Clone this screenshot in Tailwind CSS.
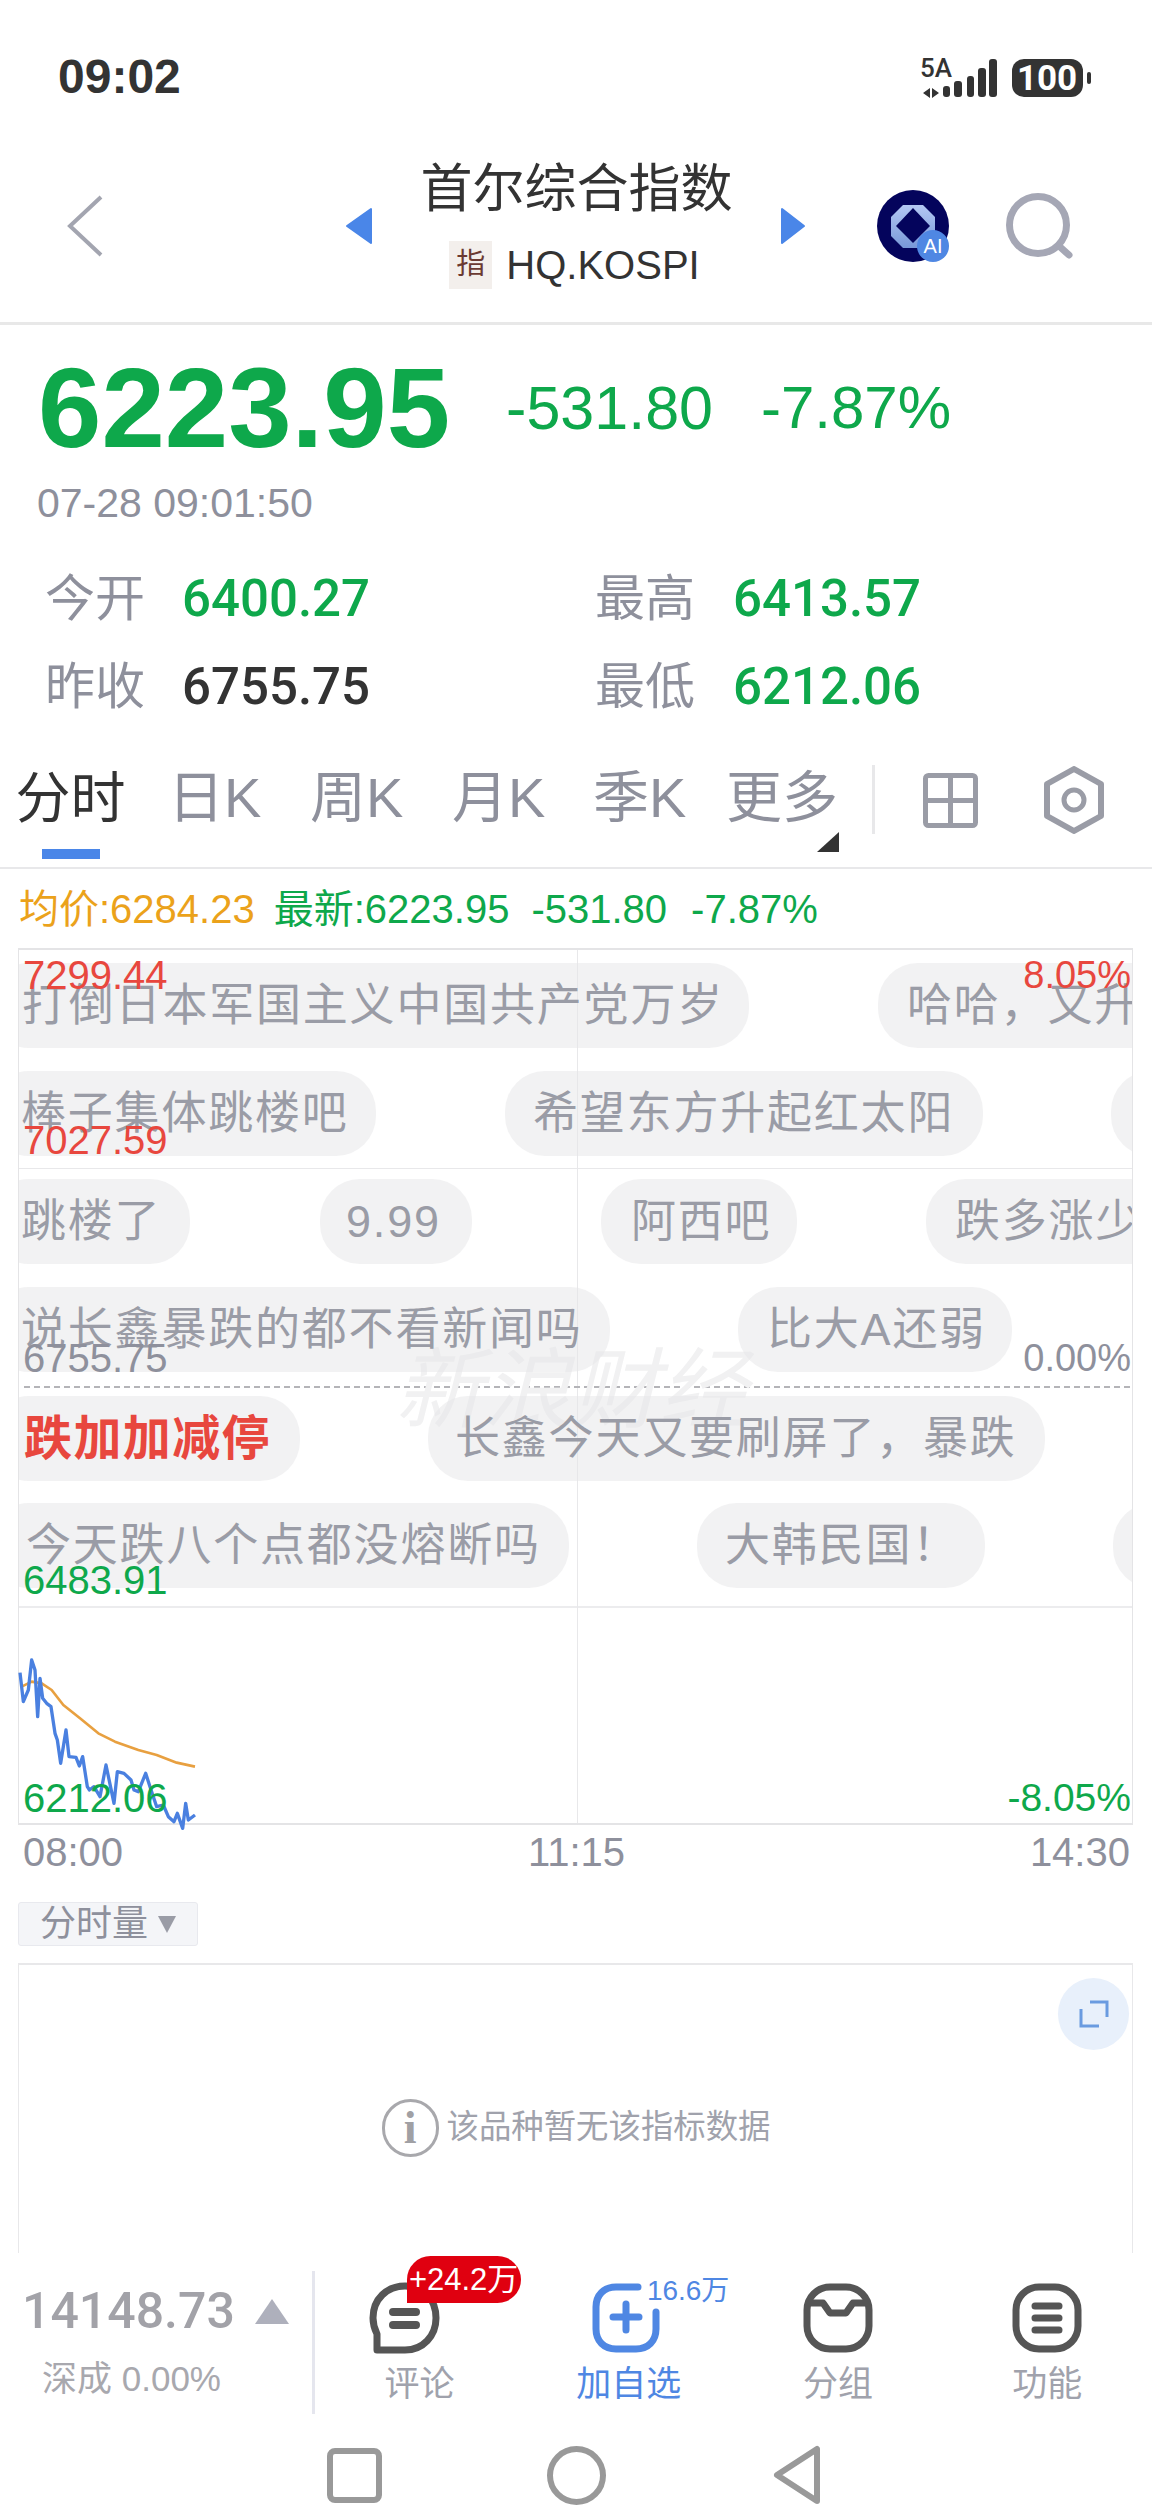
<!DOCTYPE html>
<html lang="zh">
  <head>
    <meta charset="UTF-8" />
    <meta name="viewport" content="width=device-width, initial-scale=1.0" />
    <title>首尔综合指数</title>
    <script src="https://cdn.jsdelivr.net/npm/@tailwindcss/browser@4"></script>
  </head>

  <body>
    <div class="w-[1152px] h-[2520px] overflow-hidden bg-white flex flex-col font-['Liberation_Sans','Noto_Sans_CJK_SC',sans-serif]">

      <!-- Status bar -->
      <div class="h-[154px] shrink-0 flex items-center justify-between pl-[58px] pr-[58px]">
        <span class="text-[48px] leading-none font-bold text-[#333]">09:02</span>
        <svg width="174" height="40" viewBox="0 0 174 40" class="mt-[2px]">
          <text x="0" y="19" font-size="26" font-weight="500" fill="#333" font-family="Roboto">5A</text>
          <path d="M10 30 L3 35 L10 40 Z M12 30 L19 35 L12 40 Z" fill="#333" />
          <rect x="23" y="28" width="7" height="11" rx="3" fill="#333" />
          <rect x="34" y="23" width="8" height="16" rx="3" fill="#333" />
          <rect x="47" y="18" width="7" height="21" rx="3" fill="#333" />
          <rect x="58" y="10" width="8" height="29" rx="3" fill="#333" />
          <rect x="69" y="1" width="8" height="38" rx="3" fill="#333" />
          <rect x="92" y="1" width="71" height="38" rx="12" fill="#333" />
          <text x="127" y="32" font-size="35" font-weight="700" fill="#fff" text-anchor="middle" font-family="Roboto">100</text>
          <rect x="167" y="14" width="4" height="12" rx="2" fill="#333" />
        </svg>
      </div>

      <!-- Header -->
      <header class="h-[171px] shrink-0 border-b-[3px] border-[#e8e8e8] flex items-start pt-[8px]">
        <div class="w-[345px] shrink-0 h-[127px] flex items-center pl-[67px]">
          <svg width="36" height="64" viewBox="0 0 36 64"><path d="M34 3 L3 32 L34 61" fill="none" stroke="#a3a5b0" stroke-width="4" /></svg>
        </div>
        <div class="w-[461px] shrink-0 h-[127px] flex items-center justify-between">
          <svg width="28" height="38" viewBox="0 0 28 38"><path d="M26 2 V36 L2 19 Z" fill="#4a86e8" stroke="#4a86e8" stroke-width="2" stroke-linejoin="round" /></svg>
          <div class="flex flex-col items-center">
            <h1 class="text-[52px] leading-[52px] text-[#333]">首尔综合指数</h1>
            <div class="flex items-center gap-[14px] mt-[26px] -ml-[4px]">
              <span class="w-[43px] h-[48px] bg-[#f3efec] text-[#6b3a32] text-[29px] flex items-center justify-center">指</span>
              <span class="text-[40px] leading-[48px] text-[#333]">HQ.KOSPI</span>
            </div>
          </div>
          <svg width="26" height="38" viewBox="0 0 26 38"><path d="M2 2 V36 L24 19 Z" fill="#4a86e8" stroke="#4a86e8" stroke-width="2" stroke-linejoin="round" /></svg>
        </div>
        <div class="h-[127px] flex items-center ml-[71px]">
          <svg width="72" height="72" viewBox="0 0 72 72">
            <defs><linearGradient id="ringFill" x1="0" y1="0" x2="0" y2="1"><stop offset="0" stop-color="#b4c8f4" /><stop offset="1" stop-color="#7898d8" /></linearGradient></defs>
            <circle cx="36" cy="36" r="36" fill="#04045c" />
            <path d="M26 15 H46 L58 27 V46 L46 58 H26 L14 46 V27 Z" fill="url(#ringFill)" />
            <path d="M36 18 L53 36 L36 53 L19 36 Z" fill="#04045c" />
            <circle cx="56" cy="56" r="16" fill="#4f87e3" />
            <text x="56" y="63" font-size="20" fill="#fff" text-anchor="middle" font-family="Liberation Sans">AI</text>
          </svg>
          <svg width="68" height="66" viewBox="0 0 68 66" class="ml-[57px]">
            <circle cx="32" cy="32" r="28.5" fill="none" stroke="#a5a7b5" stroke-width="7" />
            <line x1="53" y1="53" x2="63" y2="62" stroke="#a5a7b5" stroke-width="7" stroke-linecap="round" />
          </svg>
        </div>
      </header>

      <!-- Quote -->
      <section class="shrink-0 pt-[33px]">
        <div class="flex items-center h-[100px] pl-[38px] text-[#0ea84b]">
          <span class="text-[114px] leading-[100px] font-bold">6223.95</span>
          <span class="text-[61px] leading-none ml-[56px]">-531.80</span>
          <span class="text-[60px] leading-none ml-[48px]">-7.87%</span>
        </div>
        <div class="h-[50px] mt-[20px] pl-[37px] text-[41px] leading-[50px] text-[#8e909c]">07-28 09:01:50</div>
        <div class="grid grid-cols-[595px_1fr] mt-[27px] font-['Roboto','Noto_Sans_CJK_SC',sans-serif]">
          <div class="h-[88px] flex items-center pl-[45px]"><span class="w-[137px] text-[50px] text-[#8e909c]">今开</span><span class="text-[51px] font-medium text-[#0ea84b]">6400.27</span></div>
          <div class="h-[88px] flex items-center"><span class="w-[138px] text-[50px] text-[#8e909c]">最高</span><span class="text-[51px] font-medium text-[#0ea84b]">6413.57</span></div>
          <div class="h-[88px] flex items-center pl-[45px]"><span class="w-[137px] text-[50px] text-[#8e909c]">昨收</span><span class="text-[51px] font-medium text-[#333]">6755.75</span></div>
          <div class="h-[88px] flex items-center"><span class="w-[138px] text-[50px] text-[#8e909c]">最低</span><span class="text-[51px] font-medium text-[#0ea84b]">6212.06</span></div>
        </div>
      </section>

      <!-- Period tabs -->
      <nav class="relative h-[138px] shrink-0 border-b-2 border-[#e8e8ea] flex items-start pt-[31px] pl-[16px] text-[56px] leading-[72px] text-[#8e909c] whitespace-nowrap">
        <div class="flex flex-col items-center w-[109px]">
          <span class="text-[55px] text-[#333]">分时</span>
          <span class="w-[58px] h-[10px] bg-[#4a86e8] mt-[15px]"></span>
        </div>
        <span class="ml-[43px] w-[92px]">日K</span>
        <span class="ml-[50px] w-[92px]">周K</span>
        <span class="ml-[50px] w-[92px]">月K</span>
        <span class="ml-[49px] w-[92px]">季K</span>
        <span class="ml-[41px] w-[112px]">更多</span>
        <span class="w-[3px] h-[69px] bg-[#e8e8ea] mt-[3px] ml-[34px]"></span>
        <svg width="55" height="55" viewBox="0 0 55 55" class="ml-[48px] mt-[11px]">
          <rect x="2.5" y="2.5" width="50" height="50" rx="3" fill="none" stroke="#9a9ca6" stroke-width="5" />
          <path d="M27.5 3 V52 M3 27.5 H52" stroke="#9a9ca6" stroke-width="5" />
        </svg>
        <svg width="60" height="68" viewBox="0 0 60 68" class="ml-[66px] mt-[4px]">
          <path d="M30 3 L57 18 V50 L30 65 L3 50 V18 Z" fill="none" stroke="#9a9ca6" stroke-width="6" stroke-linejoin="round" />
          <circle cx="30" cy="34" r="10" fill="none" stroke="#9a9ca6" stroke-width="5" />
        </svg>
        <svg width="22" height="20" viewBox="0 0 22 20" class="absolute left-[817px] top-[101px]"><path d="M22 0 V20 H0 Z" fill="#333" /></svg>
      </nav>

      <!-- Legend -->
      <div class="h-[79px] shrink-0 flex items-center pl-[19px] text-[40px] leading-none text-[#0ea84b] whitespace-nowrap">
        <span class="text-[#eba21b]">均价:6284.23</span>
        <span class="ml-[19px]">最新:6223.95</span>
        <span class="ml-[22px]">-531.80</span>
        <span class="ml-[24px]">-7.87%</span>
      </div>

      <!-- Chart -->
      <div class="relative shrink-0 ml-[18px] w-[1115px] h-[877px] border border-[#e4e4e6] border-t-2 border-b-2">
        <div class="absolute left-0 right-0 top-[218px] h-px bg-[#e8e8ea]"></div>
        <div class="absolute left-0 right-0 top-[656px] h-[2px] bg-[#ececee]"></div>
        <div class="absolute top-0 bottom-0 left-[558px] w-px bg-[#e8e8ea]"></div>
        <div class="absolute left-[5px] right-[2px] top-[436px] border-t-2 border-dashed border-[#b4b4b8]"></div>
        <span class="absolute left-[376px] top-[396px] text-[88px] leading-[90px] italic text-[#f1f1f2] whitespace-nowrap">新浪财经</span>

        <svg width="260" height="240" viewBox="0 0 780 720" class="absolute left-[-19px] top-[670px]">
          <polyline fill="none" stroke="#e8a040" stroke-width="8" stroke-linejoin="round" points="65,200 95,185 125,190 155,210 190,255 240,295 295,340 345,365 415,390 470,405 530,428 585,440" />
          <polyline fill="none" stroke="#4a80e0" stroke-width="10" stroke-linejoin="round" points="60,158 70,245 85,210 95,120 105,150 113,290 120,175 128,235 140,250 153,260 165,340 172,360 182,430 198,330 207,410 228,412 238,438 248,410 262,500 268,510 282,500 300,530 318,435 342,550 352,455 372,460 393,480 402,510 415,515 437,460 450,500 470,560 490,555 505,590 522,605 532,580 548,625 557,550 565,600 585,585" />
        </svg>

        <!-- Danmaku comments -->
        <div class="absolute inset-0 overflow-hidden text-[45px] tracking-[1.8px] text-[#9a9ca6]">
          <div class="absolute left-[-30px] top-[13px] w-[760px] h-[85px] rounded-[40px] bg-[#e6e6e8]/50 flex items-center pl-[33px] whitespace-nowrap">打倒日本军国主义中国共产党万岁</div>
          <div class="absolute left-[859px] top-[13px] w-[400px] h-[85px] rounded-[40px] bg-[#e6e6e8]/50 flex items-center pl-[29px] whitespace-nowrap">哈哈，又升</div>
          <div class="absolute left-[-30px] top-[121px] w-[387px] h-[85px] rounded-[40px] bg-[#e6e6e8]/50 flex items-center pl-[32px] whitespace-nowrap">棒子集体跳楼吧</div>
          <div class="absolute left-[486px] top-[121px] w-[478px] h-[85px] rounded-[40px] bg-[#e6e6e8]/50 flex items-center pl-[28px] whitespace-nowrap">希望东方升起红太阳</div>
          <div class="absolute left-[1092px] top-[121px] w-[200px] h-[85px] rounded-[40px] bg-[#e6e6e8]/50"></div>
          <div class="absolute left-[-30px] top-[229px] w-[201px] h-[85px] rounded-[40px] bg-[#e6e6e8]/50 flex items-center pl-[32px] whitespace-nowrap">跳楼了</div>
          <div class="absolute left-[301px] top-[229px] w-[152px] h-[85px] rounded-[40px] bg-[#e6e6e8]/50 flex items-center pl-[26px] whitespace-nowrap">9.99</div>
          <div class="absolute left-[582px] top-[229px] w-[196px] h-[85px] rounded-[40px] bg-[#e6e6e8]/50 flex items-center pl-[30px] whitespace-nowrap">阿西吧</div>
          <div class="absolute left-[907px] top-[229px] w-[400px] h-[85px] rounded-[40px] bg-[#e6e6e8]/50 flex items-center pl-[29px] whitespace-nowrap">跌多涨少</div>
          <div class="absolute left-[-30px] top-[337px] w-[621px] h-[85px] rounded-[40px] bg-[#e6e6e8]/50 flex items-center pl-[32px] whitespace-nowrap">说长鑫暴跌的都不看新闻吗</div>
          <div class="absolute left-[719px] top-[337px] w-[274px] h-[85px] rounded-[40px] bg-[#e6e6e8]/50 flex items-center pl-[29px] whitespace-nowrap">比大A还弱</div>
          <div class="absolute left-[-30px] top-[446px] w-[311px] h-[85px] rounded-[40px] bg-[#e6e6e8]/50 flex items-center pl-[35px] whitespace-nowrap text-[48px] tracking-[1.4px] font-bold text-[#e8473e]">跌加加减停</div>
          <div class="absolute left-[409px] top-[446px] w-[617px] h-[85px] rounded-[40px] bg-[#e6e6e8]/50 flex items-center pl-[27px] whitespace-nowrap">长鑫今天又要刷屏了，暴跌</div>
          <div class="absolute left-[-30px] top-[553px] w-[580px] h-[85px] rounded-[40px] bg-[#e6e6e8]/50 flex items-center pl-[37px] whitespace-nowrap">今天跌八个点都没熔断吗</div>
          <div class="absolute left-[678px] top-[553px] w-[288px] h-[85px] rounded-[40px] bg-[#e6e6e8]/50 flex items-center pl-[28px] whitespace-nowrap">大韩民国！</div>
          <div class="absolute left-[1094px] top-[553px] w-[200px] h-[85px] rounded-[40px] bg-[#e6e6e8]/50"></div>
        </div>

        <!-- Axis labels -->
        <span class="absolute left-[4px] top-[5px] text-[40px] leading-[40px] text-[#e8473e]">7299.44</span>
        <span class="absolute right-[1px] top-[5px] text-[38px] leading-[40px] text-[#e8473e]">8.05%</span>
        <span class="absolute left-[4px] top-[170px] text-[40px] leading-[40px] text-[#e8473e]">7027.59</span>
        <span class="absolute left-[4px] top-[388px] text-[40px] leading-[40px] text-[#8e909c]">6755.75</span>
        <span class="absolute right-[1px] top-[388px] text-[38px] leading-[40px] text-[#8e909c]">0.00%</span>
        <span class="absolute left-[4px] top-[610px] text-[40px] leading-[40px] text-[#0ea84b]">6483.91</span>
        <span class="absolute left-[4px] top-[828px] text-[40px] leading-[40px] text-[#0ea84b]">6212.06</span>
        <span class="absolute right-[1px] top-[828px] text-[39px] leading-[40px] text-[#0ea84b]">-8.05%</span>
      </div>

      <!-- Time axis -->
      <div class="h-[54px] shrink-0 flex justify-between items-center pl-[23px] pr-[22px] text-[40px] leading-none text-[#8e909c]">
        <span>08:00</span><span>11:15</span><span>14:30</span>
      </div>

      <!-- Volume selector -->
      <div class="shrink-0 ml-[18px] mt-[23px] w-[180px] h-[44px] bg-[#f4f5f8] border border-[#e8e9ee] rounded-[3px] flex items-center pl-[21px] text-[36px] leading-none text-[#8e909c]">
        分时量
        <svg width="18" height="18" viewBox="0 0 18 18" class="ml-[10px]"><path d="M0 1 H18 L9 18 Z" fill="#9a9ca6" /></svg>
      </div>

      <!-- Volume panel -->
      <div class="relative shrink-0 ml-[18px] mt-[17px] w-[1115px] h-[290px] border-x border-t-2 border-[#e8e8ea] flex items-center justify-center">
        <div class="absolute right-[3px] top-[13px] w-[71px] h-[72px] rounded-full bg-[#e8f0fb] flex items-center justify-center">
          <svg width="32" height="32" viewBox="0 0 32 32" fill="none" stroke="#6a9be0" stroke-width="3"><path d="M12 4 H29 V19" /><path d="M3 11 V28 H21" /></svg>
        </div>
        <div class="flex items-center gap-[8px] mt-[37px] ml-[1px]">
          <span class="w-[57px] h-[58px] rounded-full border-[3px] border-[#a8a8ac] flex items-center justify-center text-[46px] leading-none font-bold font-['Liberation_Serif'] text-[#a0a0a4]">i</span>
          <span class="text-[32.4px] leading-none text-[#a0a2ac]">该品种暂无该指标数据</span>
        </div>
      </div>

      <!-- Bottom toolbar -->
      <div class="h-[177px] shrink-0 flex bg-white">
        <div class="w-[313px] shrink-0 pt-[33px]">
          <div class="flex items-center pl-[22px] h-[50px]">
            <span class="font-['Roboto'] font-medium text-[50px] leading-none text-[#a2a2a8]">14148.73</span>
            <svg width="34" height="25" viewBox="0 0 34 25" class="ml-[20px]"><path d="M17 0 L34 25 H0 Z" fill="#aeb0bc" /></svg>
          </div>
          <div class="pl-[42px] mt-[23px] text-[35px] leading-[40px] text-[#a8a8ae]">深成 0.00%</div>
        </div>
        <div class="flex-1 border-l-[3px] border-[#e5e6ee] my-[18px] -ml-[1px] grid grid-cols-4 h-[143px]">
          <div class="flex flex-col items-center -mt-[18px] pt-[29px] text-[35px] leading-[40px] text-[#a0a2ac]">
            <div class="relative mr-[30px] w-[72px] h-[72px]">
              <svg width="72" height="72" viewBox="0 0 72 72" fill="none" stroke="#555" stroke-width="7">
                <path d="M8 68 V52 C5 46 4 42 4 36 C4 17 18 4 36 4 C54 4 67 17 67 36 C67 54 54 68 36 68 Z" stroke-linejoin="round" />
                <path d="M24 30 H47 M24 43 H47" stroke-width="8" stroke-linecap="round" />
              </svg>
              <span class="absolute left-[38px] top-[-26px] w-[114px] h-[47px] rounded-[24px] rounded-bl-none bg-[#e00010] flex items-center justify-center text-[31px] leading-none text-white whitespace-nowrap">+24.2万</span>
            </div>
            <span class="mt-[10px]">评论</span>
          </div>
          <div class="flex flex-col items-center -mt-[18px] pt-[30px] text-[35px] leading-[40px] text-[#4f87e3]">
            <div class="relative mr-[6px] w-[68px] h-[70px]">
              <svg width="68" height="70" viewBox="0 0 68 70" fill="none" stroke="#4f87e3" stroke-width="7" stroke-linecap="round">
                <path d="M46 4 H24 C12 4 4 12 4 24 V46 C4 58 12 66 24 66 H44 C56 66 64 58 64 46 V29" />
                <path d="M34 21 V47 M21 34 H47" />
              </svg>
              <span class="absolute left-[55px] top-[-8px] text-[28px] leading-[32px] whitespace-nowrap">16.6万</span>
            </div>
            <span class="mt-[11px]">加自选</span>
          </div>
          <div class="flex flex-col items-center -mt-[18px] pt-[30px] text-[35px] leading-[40px] text-[#a0a2ac]">
            <svg width="70" height="70" viewBox="0 0 70 70" fill="none" stroke="#555" stroke-width="7">
              <rect x="4" y="4" width="62" height="62" rx="23" />
              <path d="M5 20 H20 L27 30 H43 L50 20 H65" stroke-linejoin="round" />
            </svg>
            <span class="mt-[11px]">分组</span>
          </div>
          <div class="flex flex-col items-center -mt-[18px] pt-[30px] text-[35px] leading-[40px] text-[#a0a2ac]">
            <svg width="70" height="70" viewBox="0 0 70 70" fill="none" stroke="#555" stroke-width="7">
              <rect x="4" y="4" width="62" height="62" rx="23" />
              <path d="M23 23 H47 M23 35 H47 M23 47 H47" stroke-linecap="round" />
            </svg>
            <span class="mt-[11px]">功能</span>
          </div>
        </div>
      </div>

      <!-- Android nav -->
      <div class="h-[90px] shrink-0 flex items-center pl-[327px]">
        <svg width="55" height="55" viewBox="0 0 55 55"><rect x="3" y="3" width="49" height="49" rx="5" fill="none" stroke="#999" stroke-width="6" /></svg>
        <svg width="59" height="59" viewBox="0 0 59 59" class="ml-[165px]"><circle cx="29.5" cy="29.5" r="26.5" fill="none" stroke="#999" stroke-width="6" /></svg>
        <svg width="48" height="60" viewBox="0 0 48 60" class="ml-[167px]"><path d="M44 4 V56 L4 30 Z" fill="none" stroke="#999" stroke-width="6" stroke-linejoin="round" /></svg>
      </div>
    </div>
  </body>
</html>
